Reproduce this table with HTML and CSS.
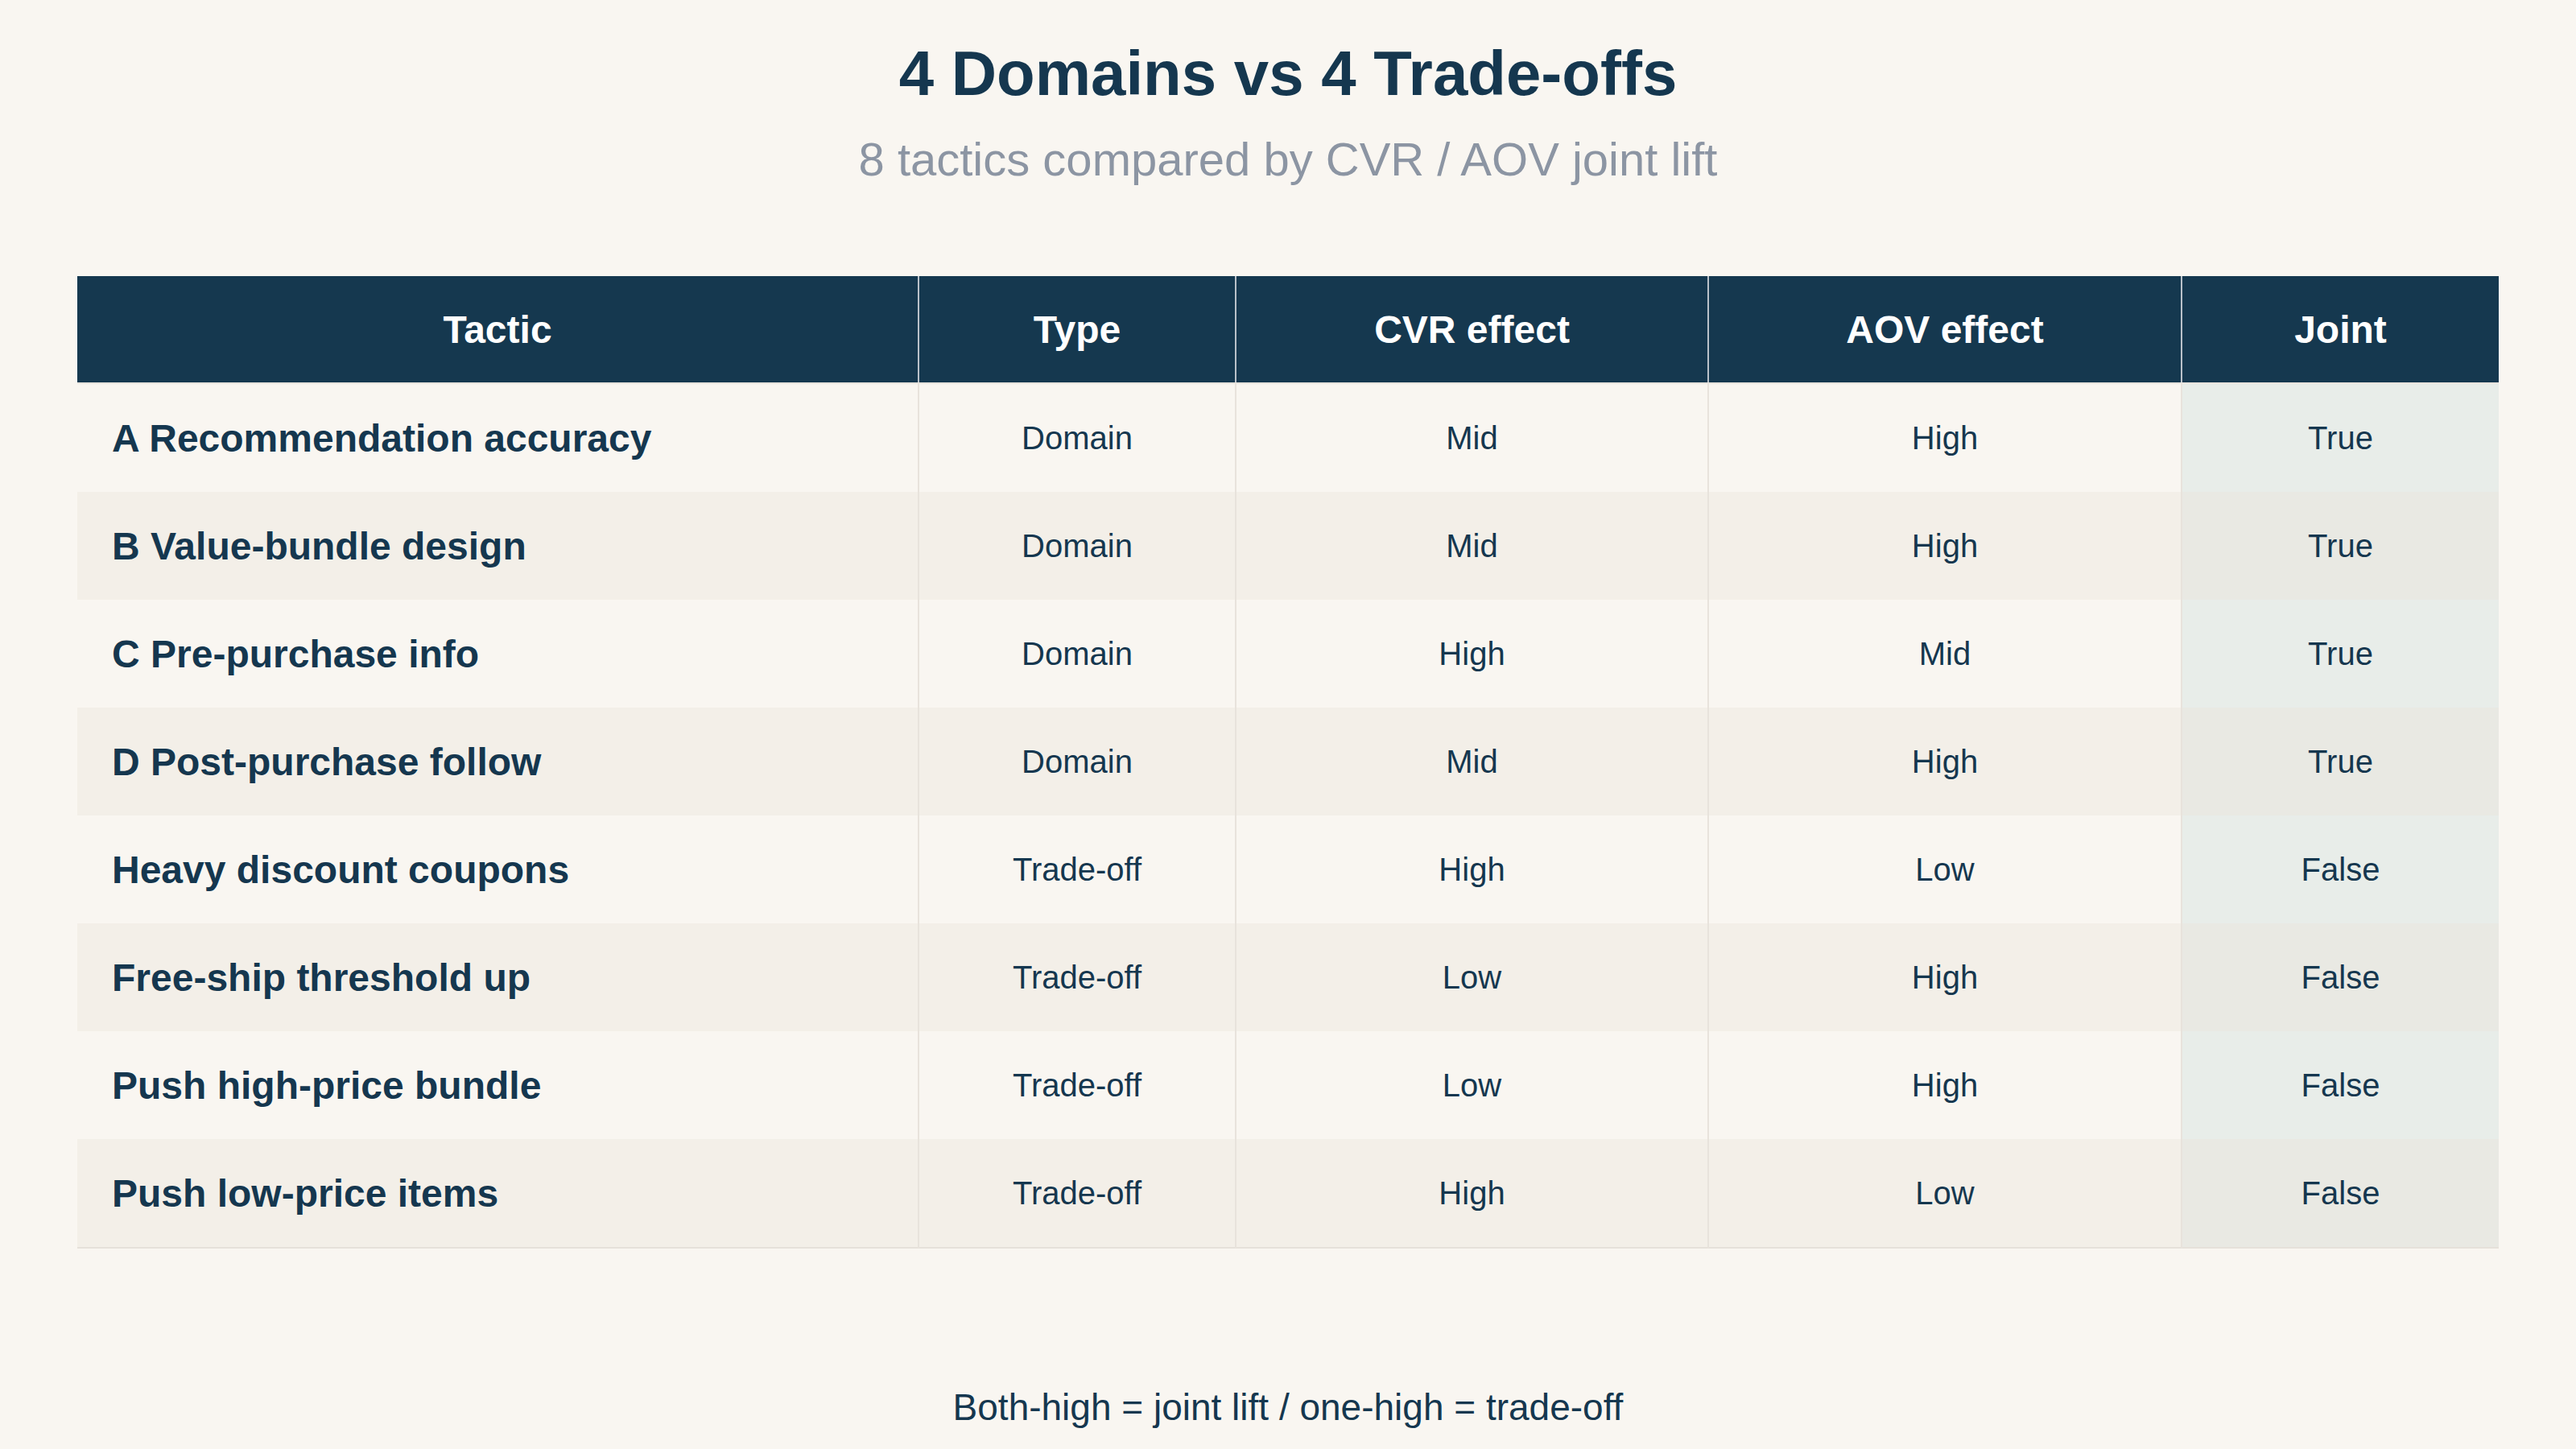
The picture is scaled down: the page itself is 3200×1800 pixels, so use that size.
FILE: index.html
```html
<!DOCTYPE html>
<html lang="en">
<head>
<meta charset="utf-8">
<title>4 Domains vs 4 Trade-offs</title>
<link rel="stylesheet" href="styles.css">
</head>
<body>
<main class="page">
  <header class="heading">
    <h1 class="title">4 Domains vs 4 Trade-offs</h1>
    <p class="subtitle">8 tactics compared by CVR / AOV joint lift</p>
  </header>
  <table class="grid">
    <colgroup>
      <col class="c-tactic">
      <col class="c-type">
      <col class="c-cvr">
      <col class="c-aov">
      <col class="c-joint">
    </colgroup>
    <thead>
      <tr>
        <th>Tactic</th>
        <th>Type</th>
        <th>CVR effect</th>
        <th>AOV effect</th>
        <th>Joint</th>
      </tr>
    </thead>
    <tbody>
      <tr><td class="name">A Recommendation accuracy</td><td>Domain</td><td>Mid</td><td>High</td><td class="joint">True</td></tr>
      <tr><td class="name">B Value-bundle design</td><td>Domain</td><td>Mid</td><td>High</td><td class="joint">True</td></tr>
      <tr><td class="name">C Pre-purchase info</td><td>Domain</td><td>High</td><td>Mid</td><td class="joint">True</td></tr>
      <tr><td class="name">D Post-purchase follow</td><td>Domain</td><td>Mid</td><td>High</td><td class="joint">True</td></tr>
      <tr><td class="name">Heavy discount coupons</td><td>Trade-off</td><td>High</td><td>Low</td><td class="joint">False</td></tr>
      <tr><td class="name">Free-ship threshold up</td><td>Trade-off</td><td>Low</td><td>High</td><td class="joint">False</td></tr>
      <tr><td class="name">Push high-price bundle</td><td>Trade-off</td><td>Low</td><td>High</td><td class="joint">False</td></tr>
      <tr><td class="name">Push low-price items</td><td>Trade-off</td><td>High</td><td>Low</td><td class="joint">False</td></tr>
    </tbody>
  </table>
  <p class="footnote">Both-high = joint lift / one-high = trade-off</p>
</main>
</body>
</html>
```
FILE: styles.css
```css
html, body {
  margin: 0;
  padding: 0;
  background: #f9f6f1;
}

body {
  font-family: "Liberation Sans", Arial, sans-serif;
  color: #15374f;
  width: 3200px;
  height: 1800px;
  overflow: hidden;
}

.page {
  display: flex;
  flex-direction: column;
  align-items: center;
  padding-top: 52px;
}

.heading {
  display: flex;
  flex-direction: column;
  align-items: center;
  gap: 39px;
}

.title {
  margin: 0;
  font-size: 78px;
  line-height: 1;
  font-weight: 700;
  color: #15374f;
}

.subtitle {
  margin: 0;
  font-size: 58px;
  line-height: 1;
  color: #8c95a3;
}

.grid {
  margin-top: 116px;
  width: 3008px;
  border-collapse: collapse;
  table-layout: fixed;
  border-bottom: 2px solid #e6e1da;
}

.c-tactic { width: 1045px; }
.c-type { width: 394px; }
.c-cvr { width: 587px; }
.c-aov { width: 588px; }
.c-joint { width: 394px; }

.grid th {
  height: 132px;
  padding: 0;
  background: #15384f;
  color: #ffffff;
  font-size: 48px;
  font-weight: 700;
  text-align: center;
  vertical-align: middle;
  border-left: 2px solid #b9c1c9;
  border-bottom: 2px solid #e8e4de;
}

.grid th:first-child {
  border-left: none;
}

.grid td {
  height: 134px;
  padding: 0;
  font-size: 40px;
  text-align: center;
  vertical-align: middle;
  border-left: 2px solid #e8e3dc;
  color: #15374f;
}

.grid td:first-child {
  border-left: none;
}

.grid tbody tr:nth-child(odd) td {
  background: #f9f6f1;
}

.grid tbody tr:nth-child(even) td {
  background: #f3efe8;
}

.grid td.name {
  text-align: left;
  padding-left: 43px;
  font-size: 48px;
  font-weight: 700;
}

.grid tbody tr:nth-child(odd) td.joint {
  background: #e8ede9;
}

.grid tbody tr:nth-child(even) td.joint {
  background: #e9e9e3;
}

.footnote {
  margin: 174px 0 0;
  font-size: 46px;
  line-height: 1;
  color: #15374f;
}
```
